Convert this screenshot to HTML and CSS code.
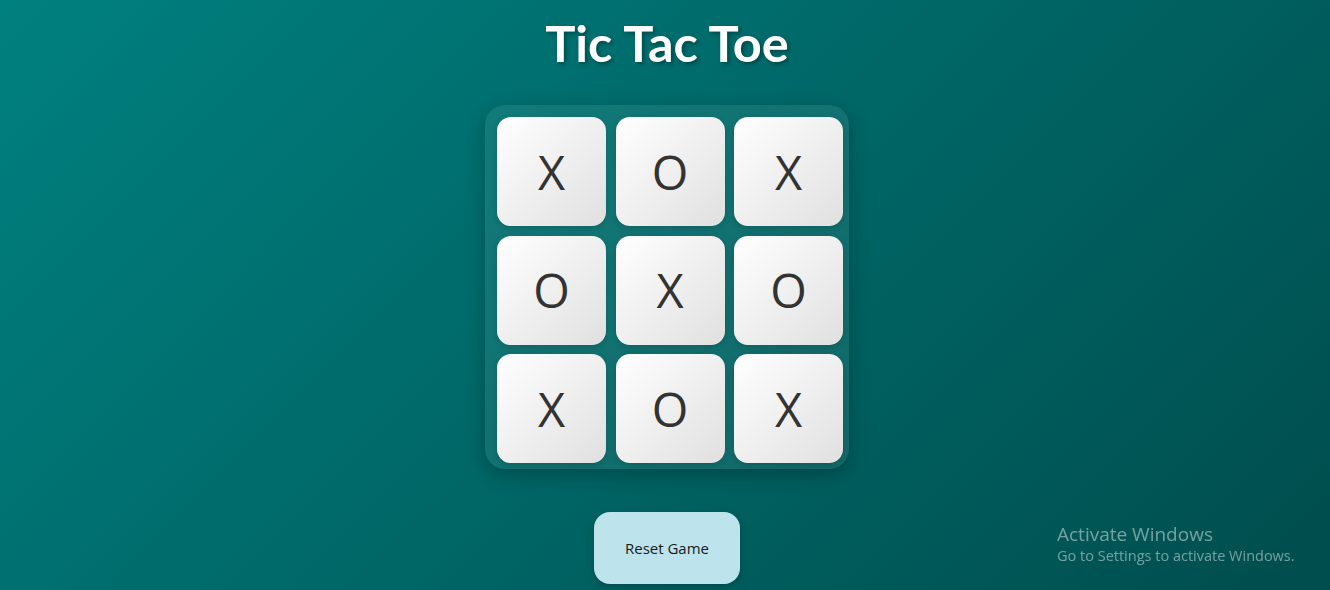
FILE: index.html
```html
<!DOCTYPE html>
<html lang="en">
<head>
<meta charset="utf-8">
<title>Tic Tac Toe</title>
<link rel="stylesheet" href="styles.css">
</head>
<body>
  <main class="game">
    <h1 class="title">Tic Tac Toe</h1>
    <div class="board">
      <button class="cell">X</button>
      <button class="cell">O</button>
      <button class="cell">X</button>
      <button class="cell">O</button>
      <button class="cell">X</button>
      <button class="cell">O</button>
      <button class="cell">X</button>
      <button class="cell">O</button>
      <button class="cell">X</button>
    </div>
    <button class="reset">Reset Game</button>
  </main>
  <div class="activate">
    <div class="activate-title">Activate Windows</div>
    <div class="activate-sub">Go to Settings to activate Windows.</div>
  </div>
</body>
</html>
```

FILE: styles.css
```css
html, body {
  margin: 0;
  padding: 0;
  height: 100%;
}

body {
  background: linear-gradient(135deg, #008080 0%, #004d4d 100%);
  font-family: "Open Sans", "Noto Sans", sans-serif;
  overflow: hidden;
}

.game {
  display: flex;
  flex-direction: column;
  align-items: center;
  padding-left: 4px;
}

.title {
  margin: 14px 0 33px;
  font-family: Lato, "Open Sans", sans-serif;
  font-size: 50.5px;
  line-height: 58px;
  font-weight: 700;
  color: #ffffff;
  text-shadow: 2px 2px 4px rgba(0, 0, 0, 0.35);
}

.board {
  display: grid;
  grid-template-columns: repeat(3, 109px);
  grid-template-rows: repeat(3, 109px);
  gap: 9.5px;
  padding: 12px 6px 6px 12px;
  background: rgba(255, 255, 255, 0.07);
  border-radius: 20px;
  box-shadow: 0 6px 20px rgba(0, 0, 0, 0.25);
}

.cell {
  display: flex;
  align-items: center;
  justify-content: center;
  border: none;
  padding: 0;
  border-radius: 14px;
  background: linear-gradient(135deg, #ffffff 0%, #e0e0e0 100%);
  box-shadow: 0 2px 6px rgba(0, 0, 0, 0.15);
  font-family: "Open Sans", "Noto Sans", sans-serif;
  font-size: 47px;
  font-weight: 400;
  color: #333333;
}

.reset {
  margin-top: 43px;
  width: 146px;
  height: 72px;
  border: none;
  border-radius: 16px;
  background: #bde3ed;
  box-shadow: 0 3px 8px rgba(0, 0, 0, 0.2);
  font-family: "Open Sans", "Noto Sans", sans-serif;
  font-size: 15px;
  color: #1a1a1a;
}

.activate {
  position: fixed;
  left: 1057px;
  top: 522px;
  color: rgba(255, 255, 255, 0.45);
  font-family: "Open Sans", "Noto Sans", sans-serif;
}

.activate-title {
  font-size: 19px;
  line-height: 24px;
}

.activate-sub {
  font-size: 14.5px;
  line-height: 20px;
}
```
